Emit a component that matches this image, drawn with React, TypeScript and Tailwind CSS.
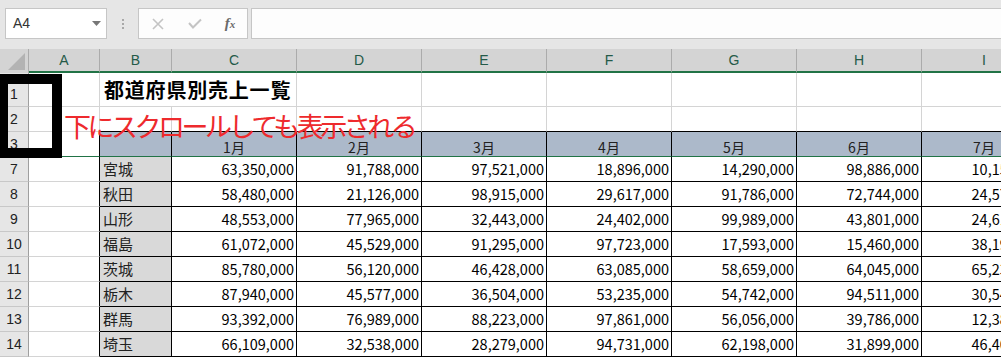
import React from "react";

const cols = [
  { k: "A", w: 71 },
  { k: "B", w: 72 },
  { k: "C", w: 125 },
  { k: "D", w: 125 },
  { k: "E", w: 125 },
  { k: "F", w: 125 },
  { k: "G", w: 125 },
  { k: "H", w: 125 },
  { k: "I", w: 125 },
];

const data: [number, string, string[]][] = [
  [7, "宮城", ["63,350,000", "91,788,000", "97,521,000", "18,896,000", "14,290,000", "98,886,000", "10,153,000"]],
  [8, "秋田", ["58,480,000", "21,126,000", "98,915,000", "29,617,000", "91,786,000", "72,744,000", "24,578,000"]],
  [9, "山形", ["48,553,000", "77,965,000", "32,443,000", "24,402,000", "99,989,000", "43,801,000", "24,612,000"]],
  [10, "福島", ["61,072,000", "45,529,000", "91,295,000", "97,723,000", "17,593,000", "15,460,000", "38,190,000"]],
  [11, "茨城", ["85,780,000", "56,120,000", "46,428,000", "63,085,000", "58,659,000", "64,045,000", "65,231,000"]],
  [12, "栃木", ["87,940,000", "45,577,000", "36,504,000", "53,235,000", "54,742,000", "94,511,000", "30,547,000"]],
  [13, "群馬", ["93,392,000", "76,989,000", "88,223,000", "97,861,000", "56,056,000", "39,786,000", "12,385,000"]],
  [14, "埼玉", ["66,109,000", "32,538,000", "28,279,000", "94,731,000", "62,198,000", "31,899,000", "46,402,000"]],
];

const months = ["1月", "2月", "3月", "4月", "5月", "6月", "7月"];

const jp = { fontFamily: '"Noto Sans CJK JP", "Noto Sans", sans-serif' };
const lat = { fontFamily: '"Liberation Sans", Arial, sans-serif' };

function RowHead({ n, h }: { n: number; h: number }) {
  return (
    <div
      className="shrink-0 w-[29px] bg-[#e6e6e6] border-r border-b border-r-[#9f9f9f] border-b-[#c8c8c8] flex items-end justify-center pb-[1px] text-[14px] text-[#222]"
      style={{ ...lat, height: h }}
    >
      {n}
    </div>
  );
}

export default function App() {
  return (
    <div className="relative w-[1001px] h-[357px] overflow-hidden bg-white select-none">
      {/* formula bar */}
      <div className="h-[49px] bg-[#e6e6e6] flex items-start pt-[8px] pl-[5px]">
        <div className="w-[102px] h-[31px] bg-white border border-[#c6c6c6] flex items-center pl-[7px] pr-[5px] text-[14px] text-[#333]" style={lat}>
          <span className="flex-1">A4</span>
          <svg width="9" height="5" viewBox="0 0 9 5"><polygon points="0,0 9,0 4.5,5" fill="#777" /></svg>
        </div>
        <div className="w-[31px] h-[31px] flex flex-col items-center justify-center gap-[2px]">
          <div className="w-[2px] h-[2px] bg-[#a8a8a8]" />
          <div className="w-[2px] h-[2px] bg-[#a8a8a8]" />
          <div className="w-[2px] h-[2px] bg-[#a8a8a8]" />
        </div>
        <div className="w-[110px] h-[31px] bg-[#fdfdfd] border border-[#c6c6c6] flex items-center">
          <div className="w-[38px] flex justify-center">
            <svg width="12" height="12" viewBox="0 0 12 12"><path d="M1 1 L11 11 M11 1 L1 11" stroke="#c4c4c4" strokeWidth="1.6" /></svg>
          </div>
          <div className="w-[36px] flex justify-center">
            <svg width="14" height="11" viewBox="0 0 14 11"><path d="M1 5 L5 9.5 L13 1.5" stroke="#c4c4c4" strokeWidth="2" fill="none" /></svg>
          </div>
          <div className="w-[34px] flex justify-center items-baseline text-[#6a6a6a] italic font-bold leading-none" style={{ fontFamily: '"Liberation Serif", serif' }}>
            <span className="text-[15px]">f</span>
            <span className="text-[11px]">x</span>
          </div>
        </div>
        <div className="ml-[3px] flex-1 h-[31px] bg-[#fdfdfd] border border-[#c6c6c6] border-r-0" />
      </div>

      {/* column headers */}
      <div className="flex h-[24px]">
        <div className="shrink-0 w-[29px] h-[24px] bg-[#d4d4d4] border-r border-[#ababab] flex items-end justify-end pr-[3px] pb-[3px]">
          <svg width="17" height="17" viewBox="0 0 17 17"><polygon points="17,0 17,17 0,17" fill="#b3b3b3" /></svg>
        </div>
        {cols.map((c) => (
          <div
            key={c.k}
            className="shrink-0 h-[24px] bg-[#d4d4d4] border-r border-r-[#ababab] border-b-2 border-b-[#217346] flex items-center justify-center text-[14px] text-[#245a48]"
            style={{ ...lat, width: c.w }}
          >
            {c.k}
          </div>
        ))}
      </div>

      {/* row 1 */}
      <div className="flex h-[34px]">
        <RowHead n={1} h={34} />
        <div className="shrink-0 w-[71px] h-[34px] border-r border-b border-[#d4d4d4]" />
        <div className="shrink-0 w-[197px] h-[34px] border-b border-[#d4d4d4] border-r flex items-center pl-[4px] text-[20px] font-bold tracking-[0.8px] text-black" style={jp}>
          都道府県別売上一覧
        </div>
        {cols.slice(3).map((c) => (
          <div key={c.k} className="shrink-0 h-[34px] border-r border-b border-[#d4d4d4]" style={{ width: c.w }} />
        ))}
      </div>

      {/* row 2 */}
      <div className="flex h-[25px]">
        <RowHead n={2} h={25} />
        <div className="shrink-0 w-[71px] h-[25px] border-r border-b border-[#d4d4d4]" />
        {cols.slice(1).map((c) => (
          <div key={c.k} className="shrink-0 h-[25px] border-r border-r-[#d4d4d4] border-b border-b-black" style={{ width: c.w }} />
        ))}
      </div>

      {/* row 3 */}
      <div className="flex h-[25px]">
        <RowHead n={3} h={25} />
        <div className="shrink-0 w-[71px] h-[25px] border-r border-r-black border-b border-b-[#217346]" />
        <div className="shrink-0 w-[72px] h-[25px] bg-[#acb9ca] border-r border-r-black border-b border-b-[#217346]" />
        {cols.slice(2).map((c, i) => (
          <div
            key={c.k}
            className="shrink-0 h-[25px] bg-[#acb9ca] border-r border-r-black border-b border-b-[#217346] flex items-end justify-center text-[14px] leading-[18px] text-[#222]"
            style={{ ...jp, width: c.w }}
          >
            {months[i]}
          </div>
        ))}
      </div>

      {/* data rows */}
      {data.map(([n, name, vals]) => (
        <div key={n} className="flex h-[25px]">
          <RowHead n={n} h={25} />
          <div className="shrink-0 w-[71px] h-[25px] border-r border-r-black border-b border-b-[#d4d4d4]" />
          <div className="shrink-0 w-[72px] h-[25px] bg-[#d9d9d9] border-r border-b border-black flex items-center pl-[3px] text-[15px] text-[#222]" style={jp}>
            {name}
          </div>
          {vals.map((v, i) => (
            <div
              key={i}
              className="shrink-0 w-[125px] h-[25px] border-r border-b border-black flex items-center justify-end pr-[2px] text-[14.5px] text-black"
              style={jp}
            >
              {v}
            </div>
          ))}
        </div>
      ))}

      {/* overlays */}
      <div className="absolute left-0 top-[74px] w-[62px] h-[84px] border-l-[8px] border-t-[10px] border-r-[10px] border-b-[10px] border-black" />
      <div
        className="absolute left-[64px] top-[108px] text-[27px] leading-[36px] tracking-[-3.5px] text-[#ee2a2d] whitespace-nowrap"
        style={jp}
      >
        下にスクロールしても表示される
      </div>
    </div>
  );
}
